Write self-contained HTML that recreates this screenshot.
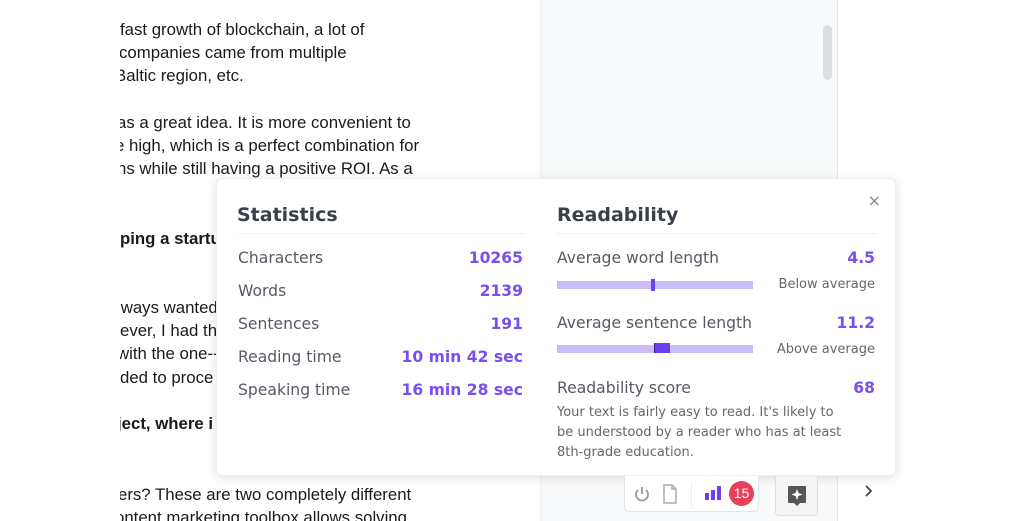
<!DOCTYPE html>
<html><head><style>
*{margin:0;padding:0;box-sizing:border-box}
body{width:1024px;height:521px;overflow:hidden;background:#fff;position:relative;font-family:"Liberation Sans",Arial,sans-serif}
.doc{position:absolute;left:120px;top:0;width:420px;height:521px;overflow:hidden}
.l{position:absolute;font-size:16.8px;color:#1a1a1a;white-space:nowrap}
.b{font-weight:bold}
.gray{position:absolute;left:540px;top:0;width:298px;height:521px;background:#f8f9fa;border-left:1px solid #eceef0;border-right:1px solid #e4e6e8}
.sb{position:absolute;left:823px;top:25px;width:9px;height:55px;background:#dcdee0;border-radius:5px}
.pop{position:absolute;left:216px;top:178px;width:680px;height:298px;background:#fff;border-radius:6px;box-shadow:0 2px 10px rgba(0,0,0,.12);border:1px solid #eceef0;font-family:"DejaVu Sans",Verdana,sans-serif}
.h{position:absolute;font-size:19px;font-weight:bold;color:#3a3f4a}
.hr{position:absolute;height:1px;background:#eef0f3}
.k{position:absolute;font-size:15.6px;color:#555a63}
.v{position:absolute;font-size:15.6px;font-weight:bold;color:#7a4ef0;text-align:right}
.bar{position:absolute;height:8px;background:#cbbdf9}
.s{position:absolute;font-size:13px;color:#666}
.tb{position:absolute;left:624px;top:476px;width:135px;height:36px;border:1px solid #e2e4e7;border-top:none;border-radius:0 0 6px 6px;background:#fff}
.btn{position:absolute;left:775px;top:476px;width:43px;height:40px;border:1px solid #dcdee0;border-top:none;border-radius:0 0 4px 4px;background:#f4f4f5}
</style></head><body>
<div class="doc">
<div class="l" style="top:20px;left:0">fast growth of blockchain, a lot of</div>
<div class="l" style="top:43px;left:-1px">companies came from multiple</div>
<div class="l" style="top:66px;left:-5px">Baltic region, etc.</div>
<div class="l" style="top:113px;left:-3px">as a great idea. It is more convenient to</div>
<div class="l" style="top:136px;left:-5px">e high, which is a perfect combination for</div>
<div class="l" style="top:159px;left:-3px">ns while still having a positive ROI. As a</div>
<div class="l b" style="top:229px;left:0">ping a startup</div>
<div class="l" style="top:298px;left:-3px">lways wanted</div>
<div class="l" style="top:321px;left:0">ever, I had thi</div>
<div class="l" style="top:344px;left:-3px">with the one--</div>
<div class="l" style="top:368px;left:0">ded to proce</div>
<div class="l b" style="top:414px;left:-3px">ject, where i</div>
<div class="l" style="top:485px;left:-2px">ers? These are two completely different</div>
<div class="l" style="top:508px;left:-5px">ontent marketing toolbox allows solving</div>
</div>
<div class="gray"></div>
<div class="sb"></div>
<div class="pop">
<div style="position:absolute;right:14px;top:12px;font-size:16px;color:#888">×</div>
<div class="h" style="left:20px;top:25px">Statistics</div>
<div class="hr" style="left:21px;top:54px;width:287px"></div>
<div class="k" style="left:21px;top:70px">Characters</div><div class="v" style="right:372px;top:70px">10265</div>
<div class="k" style="left:21px;top:103px">Words</div><div class="v" style="right:372px;top:103px">2139</div>
<div class="k" style="left:21px;top:136px">Sentences</div><div class="v" style="right:372px;top:136px">191</div>
<div class="k" style="left:21px;top:169px">Reading time</div><div class="v" style="right:372px;top:169px">10 min 42 sec</div>
<div class="k" style="left:21px;top:202px">Speaking time</div><div class="v" style="right:372px;top:202px">16 min 28 sec</div>
<div class="h" style="left:340px;top:25px">Readability</div>
<div class="hr" style="left:340px;top:54px;width:320px"></div>
<div class="k" style="left:340px;top:70px">Average word length</div><div class="v" style="right:20px;top:70px">4.5</div>
<div class="bar" style="left:340px;top:102px;width:196px"></div>
<div style="position:absolute;left:434px;top:100px;width:4px;height:12px;background:#6a3ff0"></div>
<div class="s" style="right:20px;top:98px">Below average</div>
<div class="k" style="left:340px;top:135px">Average sentence length</div><div class="v" style="right:20px;top:135px">11.2</div>
<div class="bar" style="left:340px;top:166px;width:196px"></div>
<div style="position:absolute;left:437px;top:164px;width:16px;height:10px;background:#6a3ff0;border-left:1px solid #40208a"></div>
<div class="s" style="right:20px;top:163px">Above average</div>
<div class="k" style="left:340px;top:200px">Readability score</div><div class="v" style="right:20px;top:200px">68</div>
<div class="s" style="left:340px;top:224px;line-height:20px;white-space:nowrap;color:#666">Your text is fairly easy to read. It's likely to<br>be understood by a reader who has at least<br>8th-grade education.</div>
</div>
<div class="tb">
<svg style="position:absolute;left:8px;top:9px" width="18" height="18" viewBox="0 0 18 18" fill="none" stroke="#999" stroke-width="1.8"><path d="M9 2v7"/><path d="M5 5a6 6 0 1 0 8 0"/></svg>
<svg style="position:absolute;left:37px;top:8px" width="16" height="20" viewBox="0 0 16 20" fill="none" stroke="#aaa" stroke-width="1.5"><path d="M2 1h8l4 4v14H2z"/><path d="M10 1v4h4"/></svg>
<div style="position:absolute;left:66px;top:6px;width:1px;height:26px;background:#eee"></div>
<svg style="position:absolute;left:80px;top:10px" width="16" height="14"><rect x="0" y="7" width="4" height="7" fill="#6a3ff0"/><rect x="6" y="4" width="4" height="10" fill="#6a3ff0"/><rect x="12" y="0" width="4" height="14" fill="#6a3ff0"/></svg>
<div style="position:absolute;left:104px;top:5px;width:25px;height:25px;border-radius:50%;background:#e8405a;color:#fff;font-size:14px;line-height:25px;text-align:center">15</div>
</div>
<div class="btn">
<svg style="position:absolute;left:11px;top:9px" width="20" height="22" viewBox="0 0 20 22"><path d="M2 1h16a1 1 0 0 1 1 1v15a1 1 0 0 1-1 1h-5l-3 3-3-3H2a1 1 0 0 1-1-1V2a1 1 0 0 1 1-1z" fill="#555"/><path d="M10 4l1.5 4 4 1.5-4 1.5-1.5 4-1.5-4-4-1.5 4-1.5z" fill="#fff"/></svg>
</div>
<svg style="position:absolute;left:864px;top:484px" width="10" height="14" viewBox="0 0 10 14" fill="none" stroke="#444" stroke-width="1.8"><path d="M2 2l5 5-5 5"/></svg>
</body></html>
